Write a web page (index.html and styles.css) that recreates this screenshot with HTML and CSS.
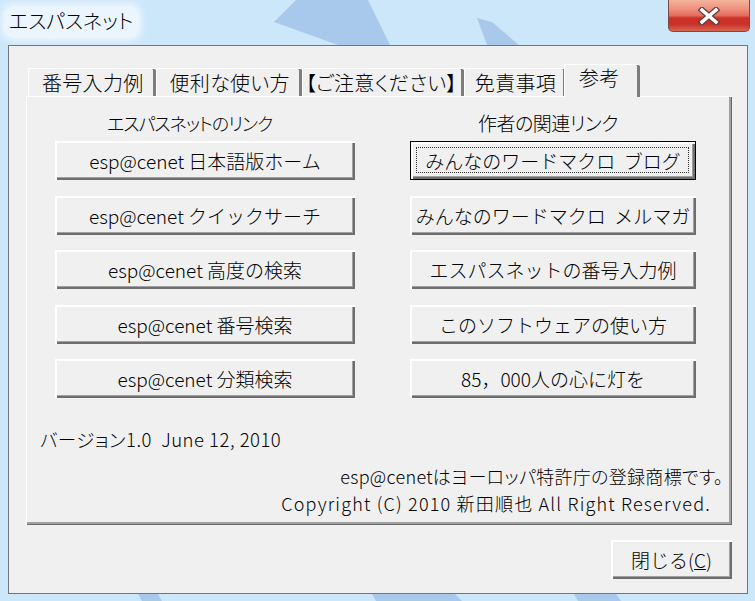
FILE: index.html
```html
<!DOCTYPE html>
<html lang="ja">
<head>
    <meta charset="UTF-8">
    <meta name="viewport" content="width=device-width, initial-scale=1.0">
    <title>エスパスネット</title>
    <link rel="stylesheet" href="styles.css">
</head>
<body>
    <div class="window">
        <svg class="frame-art" width="755" height="601" viewBox="0 0 755 601">
            <polygon points="296,0 368,0 390,45 338,45 274,22" fill="#a9c9ec"/>
            <polygon points="477,18 492,22 519,45 487,45" fill="#a9c9ec"/>
            <polygon points="138,594 158,594 162,601 142,601" fill="#a9c9ec"/>
            <polygon points="372,594 455,594 462,601 376,601" fill="#a9c9ec"/>
            <polygon points="574,594 616,594 621,601 578,601" fill="#a9c9ec"/>
        </svg>
        <div class="titlebar">
            <span class="title">エスパスネット</span>
            <div class="close-x">
                <svg width="22" height="18" viewBox="0 0 22 18">
                    <path d="M4 3 L18 15 M18 3 L4 15" stroke="#5a3a36" stroke-width="6" stroke-linecap="square"/>
                    <path d="M4 3 L18 15 M18 3 L4 15" stroke="#ffffff" stroke-width="3.6" stroke-linecap="square"/>
                </svg>
            </div>
        </div>
        <div class="client">
            <div class="tabs">
                <div class="tab">番号入力例</div>
                <div class="tab">便利な使い方</div>
                <div class="tab">【ご注意ください】</div>
                <div class="tab">免責事項</div>
                <div class="tab active">参考</div>
            </div>
            <div class="panel">
                <div class="columns">
                    <div class="col col-left">
                        <div class="col-title">エスパスネットのリンク</div>
                        <button class="btn">esp@cenet 日本語版ホーム</button>
                        <button class="btn">esp@cenet クイックサーチ</button>
                        <button class="btn">esp@cenet 高度の検索</button>
                        <button class="btn">esp@cenet 番号検索</button>
                        <button class="btn">esp@cenet 分類検索</button>
                    </div>
                    <div class="col col-right">
                        <div class="col-title">作者の関連リンク</div>
                        <button class="btn default">みんなのワードマクロ&nbsp; ブログ</button>
                        <button class="btn">みんなのワードマクロ&nbsp; メルマガ</button>
                        <button class="btn">エスパスネットの番号入力例</button>
                        <button class="btn">このソフトウェアの使い方</button>
                        <button class="btn">85，000人の心に灯を</button>
                    </div>
                </div>
                <p class="version">バージョン1.0&nbsp;&nbsp;June 12, 2010</p>
                <div class="legal">
                    <p class="note">esp@cenetはヨーロッパ特許庁の登録商標です。</p>
                    <p class="copy">Copyright (C) 2010 新田順也 All Right Reserved.</p>
                </div>
            </div>
            <div class="footer">
                <button class="btn close-btn">閉じる(<u>C</u>)</button>
            </div>
        </div>
    </div>
</body>
</html>
```

FILE: styles.css
```css
*{
    box-sizing: border-box;
    margin: 0;
    padding: 0;
}
body{
    background-color: #cde7fa;
    font-family: "Noto Sans CJK JP", "Noto Sans", sans-serif;
    font-feature-settings: "palt";
    font-weight: 300;
    color: #000;
}
.window{
    position: relative;
    width: 755px;
    height: 601px;
    display: flex;
    flex-direction: column;
    overflow: hidden;
}
.frame-art{
    position: absolute;
    left: 0;
    top: 0;
}
.titlebar{
    position: relative;
    height: 45px;
    display: flex;
    justify-content: space-between;
    align-items: flex-start;
}
.title{
    margin: 6px 0 0 4px;
    padding: 2px 6px 4px 5px;
    font-size: 20px;
    line-height: 26px;
    background-color: rgba(240, 247, 253, 0.85);
    border-radius: 9px;
    box-shadow: 0 0 6px 3px rgba(240, 247, 253, 0.85);
}
.close-x{
    width: 82px;
    height: 32px;
    margin-right: 5px;
    border: 1px solid #7b4a42;
    border-top: none;
    border-radius: 0 0 5px 5px;
    background: linear-gradient(#f5b49c 0%, #ee8f7d 30%, #e36d62 50%, #cf3028 58%, #c8312a 78%, #d9644f 100%);
    display: flex;
    align-items: center;
    justify-content: center;
}
.client{
    position: relative;
    flex: 1;
    margin: 0 7px 7px 8px;
    border: 1px solid #6e7680;
    background-color: #f0f0f0;
    padding: 18px 15px 0 17px;
    display: flex;
    flex-direction: column;
}
.tabs{
    display: flex;
    align-items: flex-end;
    padding-left: 2px;
    height: 32px;
    position: relative;
    z-index: 2;
}
.tab{
    height: 28px;
    padding: 0 12px 0 13px;
    font-size: 20px;
    line-height: 27px;
    letter-spacing: 0.3px;
    border-left: 1px solid #fff;
    border-top: 1px solid #fff;
    border-radius: 2px 2px 0 0;
    box-shadow: inset -3px 0 #7d7d7d;
    background-color: #f0f0f0;
}
.tab:nth-child(3){
    padding: 0 7px 0 3px;
}
.tab:nth-child(4){
    padding: 0 10px 0 10px;
}
.tab.active{
    height: 33px;
    margin-bottom: -1px;
    margin-left: -2px;
    padding: 0 20px 0 14px;
    line-height: 26px;
}
.panel{
    flex: 1;
    border-left: 1px solid #fff;
    border-top: 1px solid #fff;
    box-shadow: inset -1px -1px #696969, inset -3px -3px #a0a0a0;
    padding: 14px 0 8px 13px;
    display: flex;
    flex-direction: column;
}
.columns{
    display: flex;
    gap: 55px;
    padding-left: 15px;
}
.col{
    display: flex;
    flex-direction: column;
    gap: 15.5px;
}
.col-left{
    width: 300px;
}
.col-right{
    width: 286px;
}
.col-title{
    font-size: 19px;
    line-height: 24px;
    margin-bottom: -9.5px;
}
.col-left .col-title{
    padding-left: 52px;
    font-size: 18px;
    letter-spacing: -1px;
}
.col-right .col-title{
    padding-left: 68px;
    letter-spacing: -0.5px;
}
.btn{
    position: relative;
    height: 39px;
    border: none;
    background-color: #f0f0f0;
    font-family: inherit;
    font-weight: inherit;
    font-size: 19px;
    color: #000;
    box-shadow: inset 2px 2px #fff, inset -2px -2px #6e6e6e, inset -3px -3px #a0a0a0;
}
.btn.default{
    border: 1px solid #000;
}
.btn.default::after{
    content: '';
    position: absolute;
    left: 5px;
    top: 5px;
    right: 6px;
    bottom: 6px;
    border: 1px dotted #333;
}
.version{
    margin-top: 29px;
    font-size: 18.5px;
    line-height: 24px;
    letter-spacing: 0.5px;
}
.legal{
    margin-top: auto;
    text-align: right;
    font-size: 18px;
    line-height: 27px;
}
.note{
    padding-right: 9px;
    letter-spacing: 0.3px;
}
.copy{
    padding-right: 21px;
    letter-spacing: 1.2px;
}
.footer{
    display: flex;
    justify-content: flex-end;
    padding: 15px 0 14px;
}
.close-btn{
    width: 121px;
    font-size: 19px;
}
```
